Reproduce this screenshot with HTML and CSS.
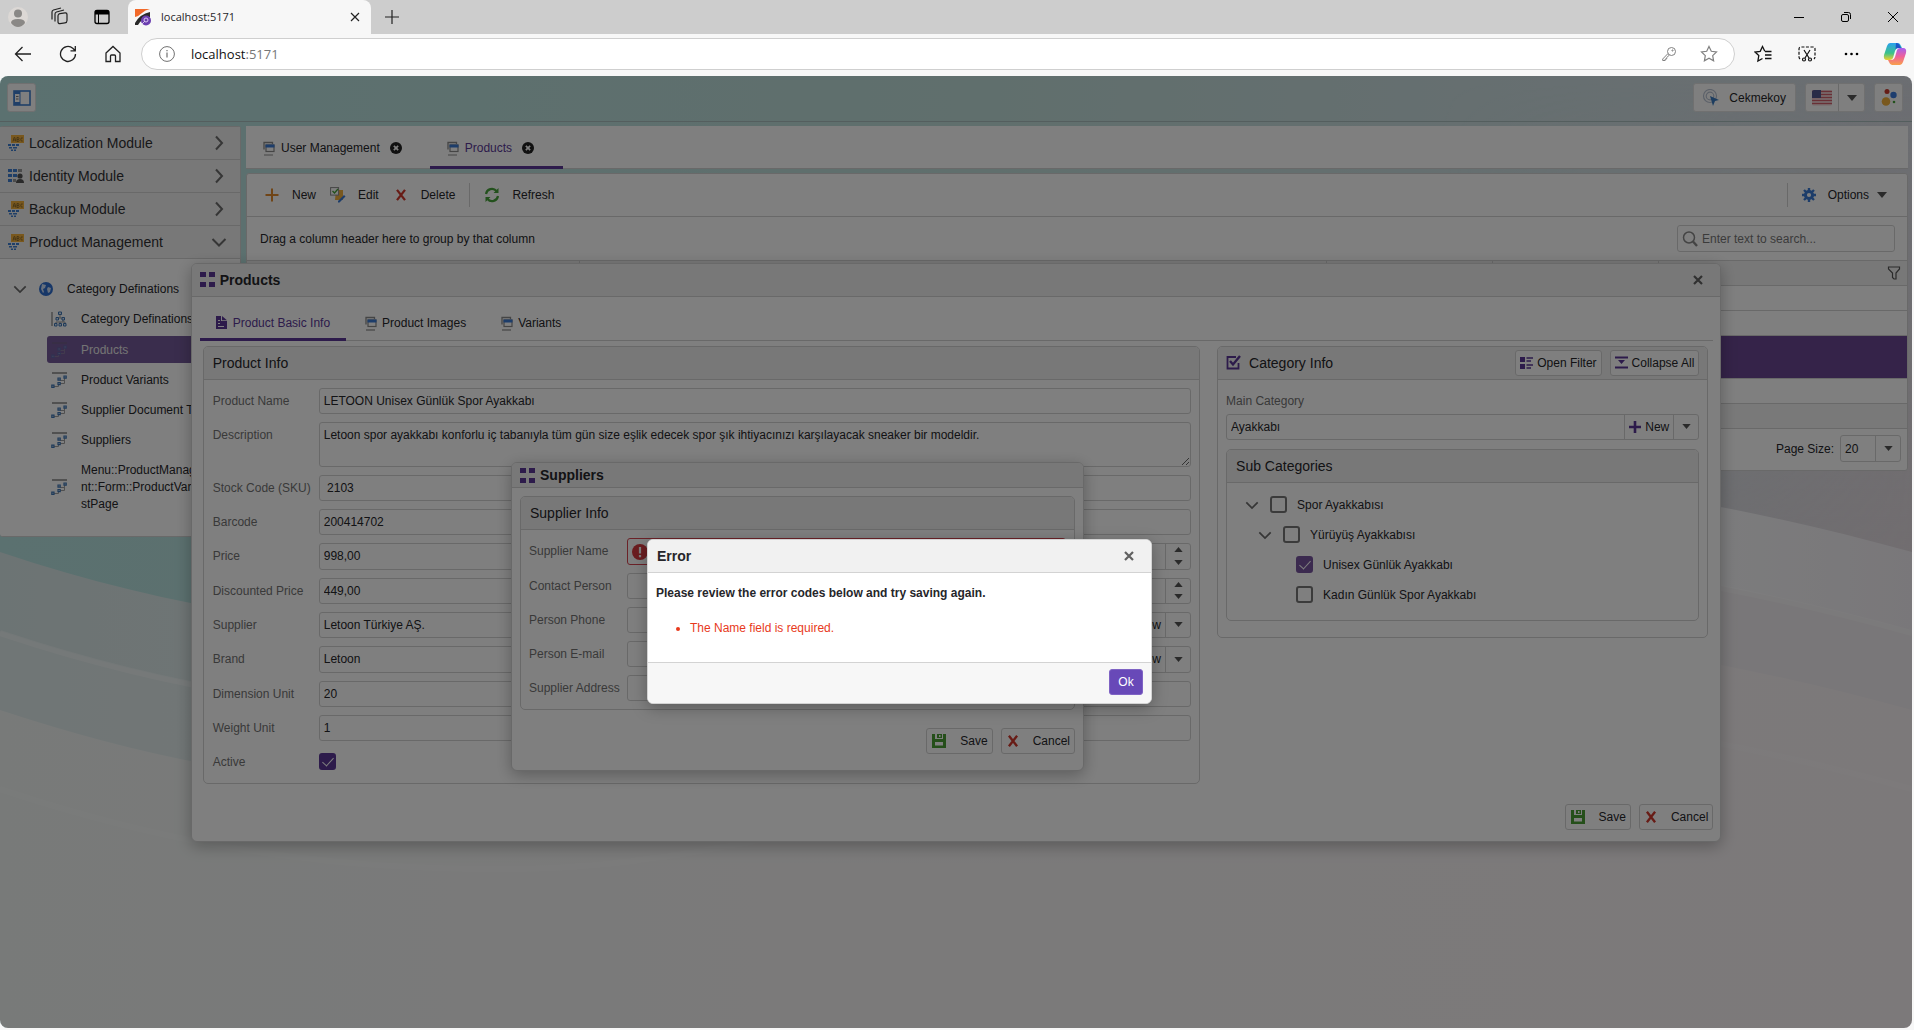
FILE: index.html
```html
<!DOCTYPE html>
<html lang="en">
<head>
<meta charset="utf-8">
<title>localhost:5171</title>
<link rel="stylesheet" href="styles.css">
</head>
<body>
<svg class="defs" aria-hidden="true">
  <symbol id="i-window" viewBox="0 0 12 16"><path d="M1 9.500V2.500h8.500v1.500" fill="none" stroke="#8a8a8a" stroke-width="1.300"/><rect x="3" y="5" width="8" height="6.500" fill="#fff" stroke="#8a8a8a" stroke-width="1.200"/><rect x="2.500" y="4.500" width="9" height="3" fill="#3a7bd5"/><path d="M1 15h9" stroke="#8a8a8a" stroke-width="1.200"/></symbol>
  <symbol id="i-module" viewBox="0 0 16 16"><rect x="3" y="0" width="13" height="8" fill="#f2b03c"/><path d="M5 6.500l1-4h.8l1 4M5.500 5h2M9 2.500v4h1.200q1 0 1-1t-1-1H9h1q1 0 1-1t-1-1zM14.800 3q-2-.9-2 1.500t2 1.500" fill="none" stroke="#8a6a2c" stroke-width=".9"/><path d="M0 9h3v2H0zM4 9h3v2H4zM8 9h3v2H8zM1 12h3v1.500H1zM5 12h4v1.500H5zM3 14.500h2V16H3zM6 14.500h2V16H6z" fill="#3f7fd0"/></symbol>
  <symbol id="i-identity" viewBox="0 0 16 16"><path d="M0 1h4v3H0zM5 1h4v3H5zM0 6h4v3H0zM5 6h4v3H5zM0 11h4v3H0z" fill="#3f7fd0"/><path d="M10 1h4v3h-4zM5 11h3v3H5z" fill="#999"/><circle cx="12" cy="8" r="2.600" fill="#555"/><path d="M8 15q0-4 4-4t4 4z" fill="#555"/></symbol>
  <symbol id="i-tree" viewBox="0 0 16 16"><path d="M1 1h15" stroke="#666" stroke-width="1.200"/><path d="M13.500 5v3.500H9M9 11.500h4.500V8M7.500 12v2.500H3" fill="none" stroke="#a0a0a0"/><path d="M13 4h2.200v2.200H13zM7 6h2.200v2.200H7zM7 10.500h2.200v2.200H7zM.8 13.200H3v2.200H.8z" fill="#dbe9f8" stroke="#3f76b5" stroke-width="1.200"/></symbol>
  <symbol id="i-org" viewBox="0 0 16 16"><path d="M1 1v14" stroke="#666"/><path d="M9 3v4M6 9v-2h6v4M5 14v-3h9v3M9 11v3" fill="none" stroke="#999"/><path d="M7.500 1h3v2.500h-3zM5 6.500h2.500V9H5zM11 6.500h2.500V9H11zM3.500 12.500H6V15H3.500zM8 12.500h2.500V15H8zM12.500 12.500H15V15h-2.500z" fill="#dbe9f8" stroke="#3f76b5"/></symbol>
  <symbol id="i-chev-r" viewBox="0 0 16 16"><path d="M5 1.500l6 6.500-6 6.500" fill="none" stroke="#6c6c6c" stroke-width="2"/></symbol>
  <symbol id="i-chev-d" viewBox="0 0 16 16"><path d="M1.500 5L8 11.500 14.500 5" fill="none" stroke="#6c6c6c" stroke-width="2"/></symbol>
  <symbol id="i-arrow" viewBox="0 0 10 6"><path d="M0 0h10L5 6z" fill="#555"/></symbol>
  <symbol id="i-arrow-up" viewBox="0 0 10 6"><path d="M0 6h10L5 0z" fill="#555"/></symbol>
  <symbol id="i-closec" viewBox="0 0 14 14"><circle cx="7" cy="7" r="7" fill="#222"/><path d="M4.500 4.500l5 5M9.500 4.500l-5 5" stroke="#fff" stroke-width="2"/></symbol>
  <symbol id="i-x" viewBox="0 0 12 12"><path d="M2.500 1.500l7 9M9.500 1.500l-7 9" stroke="#d0382c" stroke-width="2"/></symbol>
  <symbol id="i-close" viewBox="0 0 12 12"><path d="M2 2l8 8M10 2l-8 8" stroke="#606060" stroke-width="2.200"/></symbol>
  <symbol id="i-save" viewBox="0 0 16 16"><path d="M1 1h3v5h8V1h3v14H1z" fill="#4a9e34"/><path d="M6 1h5v4H6z" fill="#4a9e34"/><path d="M8 2h1.500v2H8zM4 9h8v3.500H4z" fill="#fff"/></symbol>
  <symbol id="i-grid" viewBox="0 0 15 15"><path d="M0 0h6v5H0zM9 0h6v5H9zM0 10h6v5H0zM9 10h6v5H9z" fill="#5a3796"/></symbol>
  <symbol id="i-plus" viewBox="0 0 12 12"><path d="M6 0v12M0 6h12" stroke="#5a3796" stroke-width="2.600"/></symbol>
</svg>

<header class="chrome">
  <div class="tabstrip">
    <svg class="ico20 avatar" viewBox="0 0 20 20"><circle cx="10" cy="10" r="10" fill="#dcd8d5"/><circle cx="10" cy="6.500" r="4" fill="#8a8886"/><path d="M3 16q0-4 7-4t7 4q-3 4-7 4t-7-4z" fill="#8a8886"/></svg>
    <svg class="ico20" viewBox="0 0 20 20" fill="none" stroke="#222" stroke-width="1.200"><rect x="8" y="6" width="9" height="10" rx="2" transform="skewY(-8) translate(0 2)"/><path d="M5 14.500V7q0-1.500 1.500-2L14 3M2 12.500V5q0-1.500 1.500-2L11 1"/></svg>
    <svg class="ico20" viewBox="0 0 20 20"><rect x="3" y="3.500" width="14" height="13" rx="2" fill="none" stroke="#000" stroke-width="1.300"/><path d="M3 5q0-2 2-2h10q2 0 2 2v2.500H3z"/><path d="M6.500 7v9" stroke="#000"/></svg>
    <div class="browser-tab">
      <svg class="ico18" viewBox="0 0 18 18"><path d="M1 1h15q-5 1-8 4T1 9z" fill="#f26a2a"/><path d="M1 15q5-9 15-11v5Q8 10 4 17H1z" fill="#2a2a2a"/><circle cx="12" cy="12.500" r="5" fill="#6b3fb0"/><circle cx="12" cy="12" r="2" fill="none" stroke="#d9c8ef"/><path d="M8 16l3-3" stroke="#d9c8ef"/></svg>
      <span class="browser-title">localhost:5171</span>
      <svg class="ico10" viewBox="0 0 10 10"><path d="M1 1l8 8M9 1L1 9" stroke="#222" stroke-width="1.200"/></svg>
    </div>
    <svg class="ico14" viewBox="0 0 14 14"><path d="M7 0v14M0 7h14" stroke="#222" stroke-width="1.200"/></svg>
    <div class="win-btns">
      <svg class="ico10" viewBox="0 0 10 10"><path d="M0 5.500h10" stroke="#000"/></svg>
      <svg class="ico10" viewBox="0 0 10 10" fill="none" stroke="#000"><rect x=".5" y="2.500" width="7" height="7" rx="1.500"/><path d="M3 .500h4.500q2 0 2 2V7"/></svg>
      <svg class="ico10" viewBox="0 0 10 10"><path d="M0 0l10 10M10 0L0 10" stroke="#000"/></svg>
    </div>
  </div>
  <div class="navbar">
    <svg class="ico18" viewBox="0 0 18 18" fill="none" stroke="#222" stroke-width="1.300"><path d="M17 9H1.500M8.500 2L1.500 9l7 7"/></svg>
    <svg class="ico18" viewBox="0 0 18 18" fill="none" stroke="#222" stroke-width="1.300"><path d="M16.500 9A7.500 7.500 0 1 1 13.800 3.200L16 5.500M16.300 1v4.800h-4.800"/></svg>
    <svg class="ico18" viewBox="0 0 18 18" fill="none" stroke="#222" stroke-width="1.300"><path d="M2 8l7-6.500L16 8v8.500h-4.500V11q0-1-1-1h-3q-1 0-1 1v5.500H2z"/></svg>
    <div class="address">
      <svg class="ico16" viewBox="0 0 16 16"><circle cx="8" cy="8" r="7.400" fill="none" stroke="#707070"/><path d="M8 6.500v5M8 4v1.300" stroke="#707070" stroke-width="1.200"/></svg>
      <span class="url">localhost<span class="port">:5171</span></span>
      <svg class="ico14" viewBox="0 0 14 14" fill="none" stroke="#808080"><circle cx="9.500" cy="4.500" r="4"/><path d="M6 6.500L.7 12v1.500h2.500V12h1.500v-1.500L7.500 8"/><circle cx="10.500" cy="3.500" r=".6"/></svg>
      <svg class="ico18" viewBox="0 0 18 18" fill="none" stroke="#808080" stroke-width="1.200"><path d="M9 1.500l2.300 4.800 5.200.7-3.800 3.600.9 5.200L9 13.300l-4.600 2.500.9-5.200L1.500 7l5.200-.7z"/></svg>
    </div>
    <div class="nav-right">
      <svg class="ico18" viewBox="0 0 18 18" fill="none" stroke="#111" stroke-width="1.300"><path d="M10.800 6.300L8.500 1.500 6.200 6.300 1 7l3.800 3.600-.9 5.400 4.600-2.500M11 6.500h6.500M11 10h6.500M11 13.500h6.500"/></svg>
      <svg class="ico18" viewBox="0 0 18 18" fill="none" stroke="#111" stroke-width="1.200"><path d="M2 14q-1-1-1-2V4q0-2 2-2h12q2 0 2 2v8q0 1-1 2" stroke-dasharray="3 1.500"/><path d="M6 5l5 8M12 5l-5 8"/><circle cx="6" cy="14.500" r="1.500"/><circle cx="12" cy="14.500" r="1.500"/></svg>
      <svg class="ico18" viewBox="0 0 18 18"><circle cx="4" cy="9" r="1.300"/><circle cx="9.500" cy="9" r="1.300"/><circle cx="15" cy="9" r="1.300"/></svg>
      <svg class="ico24" viewBox="0 0 24 24"><defs><linearGradient id="cp1" x1="0" y1="0" x2="0" y2="1"><stop offset="0" stop-color="#2aa0ee"/><stop offset=".6" stop-color="#3cc28a"/><stop offset="1" stop-color="#f0cf2e"/></linearGradient><linearGradient id="cp2" x1="0" y1="0" x2="0" y2="1"><stop offset="0" stop-color="#a55ff0"/><stop offset=".5" stop-color="#f0609a"/><stop offset="1" stop-color="#f8a04a"/></linearGradient></defs><path d="M7 1h8q2 0 3 3l1 2h-4q-2 0-3 3l-2 7q-1 2-3 2H4q-4 0-3-5l3-9q1-3 3-3z" fill="url(#cp1)"/><path d="M17 23H9q-2 0-3-3l-1-2h4q2 0 3-3l2-7q1-2 3-2h3q4 0 3 5l-3 9q-1 3-3 3z" fill="url(#cp2)"/><path d="M13 1q3 0 4 3l1 2h-3q-2 0-2.500 1.500z" fill="#1d55c8"/></svg>
    </div>
  </div>
</header>

<main class="app">
  <svg class="backdrop" viewBox="0 0 1912 952" preserveAspectRatio="none" aria-hidden="true">
    <defs>
      <linearGradient id="sky" x1="0" y1="0" x2="1" y2="0"><stop offset="0" stop-color="#b6e2e0"/><stop offset=".5" stop-color="#c0deda"/><stop offset=".85" stop-color="#d0dfe3"/><stop offset="1" stop-color="#d8dce4"/></linearGradient>
      <linearGradient id="fade" x1="0" y1="0" x2="0" y2="1"><stop offset="0" stop-color="#e3dbe0" stop-opacity="0"/><stop offset=".5" stop-color="#e3dbe0"/></linearGradient>
      <linearGradient id="ground" x1="0" y1="0" x2="1" y2="0"><stop offset="0" stop-color="#d9e8e8"/><stop offset=".5" stop-color="#f0f2f2"/><stop offset=".9" stop-color="#f8f8fa"/><stop offset="1" stop-color="#f3eff4"/></linearGradient>
      <linearGradient id="mid" x1="0" y1="0" x2="1" y2="0"><stop offset="0" stop-color="#e0ecec"/><stop offset=".5" stop-color="#f0f2f2"/><stop offset="1" stop-color="#f3eef2"/></linearGradient>
      <linearGradient id="low" x1="0" y1="0" x2="1" y2="0"><stop offset="0" stop-color="#f1f5f3"/><stop offset=".4" stop-color="#f6f5f5"/><stop offset="1" stop-color="#f9f3f5"/></linearGradient>
      <linearGradient id="side" x1="0" y1="0" x2="1" y2="0"><stop offset=".75" stop-color="#fff" stop-opacity="0"/><stop offset="1" stop-color="#fff"/></linearGradient>
      <mask id="right"><path d="M0 0h1912v952H0z" fill="url(#side)"/></mask>
    </defs>
    <path d="M0 0h1912v952H0z" fill="url(#sky)"/>
    <path d="M0 0h1912v952H0z" fill="url(#fade)" mask="url(#right)"/>
    <path d="M0 476C180 536 340 558 520 556S900 496 1150 426C1350 370 1620 396 1912 476V952H0z" fill="url(#ground)"/>
    <path d="M0 555C180 615 340 637 520 635S900 575 1150 505C1350 449 1620 475 1912 555V952H0z" fill="url(#mid)"/>
    <path d="M0 557C180 617 340 639 520 637S900 577 1150 507C1350 451 1620 477 1912 557" fill="none" stroke="#fff" stroke-opacity=".35" stroke-width="6"/>
    <path d="M0 634C180 694 340 716 520 714S900 654 1150 584C1350 528 1620 554 1912 634V952H0z" fill="url(#low)"/>
    <path d="M0 713C180 773 340 795 520 793S900 733 1150 663C1350 607 1620 633 1912 713" fill="none" stroke="#fff" stroke-opacity=".2" stroke-width="6"/>
  </svg>

  <div class="app-header">
    <button class="btn square" aria-label="Toggle sidebar"><svg class="ico18" viewBox="0 0 18 18"><rect x="1" y="2" width="16" height="14" fill="#fff" stroke="#3f7fd0" stroke-width="1.600"/><path d="M1 2h6.500v14H1z" fill="#3f7fd0"/><path d="M2 5h4.500v8H2z" fill="#fff"/><path d="M3 7.500h2.500M3 10h2.500" stroke="#777"/></svg></button>
    <div class="header-actions">
      <button class="btn user"><svg class="ico18" viewBox="0 0 18 18"><g fill="none" stroke="#b9c3d3" stroke-width="1.200"><circle cx="8" cy="7" r="6.500"/><circle cx="8" cy="7" r="3.800"/></g><path d="M8 7l9 4-4 1-2 5z" fill="#3a7bc0"/></svg>Cekmekoy</button>
      <div class="split">
        <button class="btn flag" aria-label="Language"><svg viewBox="0 0 20 16" width="20" height="16"><rect width="20" height="16" rx="2" fill="#f6e6e8"/><path d="M0 1.500h20M0 4.500h20M0 7.500h20M0 10.500h20M0 13.500h20" stroke="#d2606c" stroke-width="1.500"/><path d="M0 2q0-2 2-2h7v8H0z" fill="#53588e"/></svg></button>
        <button class="btn drop" aria-label="Choose language"><svg width="10" height="6"><use href="#i-arrow"/></svg></button>
      </div>
      <button class="btn square" aria-label="Theme"><svg class="ico18" viewBox="0 0 18 18"><circle cx="7" cy="2.500" r="2.500" fill="#cc3a2e"/><circle cx="13.500" cy="6" r="3.200" fill="#3a7bdc"/><circle cx="6" cy="12.500" r="4.300" fill="#f2b03c"/><circle cx="14" cy="13" r="1.300" fill="#47a33a"/></svg></button>
    </div>
  </div>

  <div class="workspace">
    <nav class="sidebar">
      <button class="module"><svg class="ico16"><use href="#i-module"/></svg><span>Localization Module</span><svg class="ico16"><use href="#i-chev-r"/></svg></button>
      <button class="module"><svg class="ico16"><use href="#i-identity"/></svg><span>Identity Module</span><svg class="ico16"><use href="#i-chev-r"/></svg></button>
      <button class="module"><svg class="ico16"><use href="#i-module"/></svg><span>Backup Module</span><svg class="ico16"><use href="#i-chev-r"/></svg></button>
      <button class="module"><svg class="ico16"><use href="#i-module"/></svg><span>Product Management</span><svg class="ico16"><use href="#i-chev-d"/></svg></button>
      <div class="menu">
        <a class="menu-root" href="#"><svg class="ico14"><use href="#i-chev-d"/></svg><svg class="ico14" viewBox="0 0 14 14"><circle cx="7" cy="7" r="7" fill="#2f6fd0"/><path d="M3 2l4 1-1 3-2 1 1 3-1 1-2-4zM9 5l3 1-1 4-2 1-1-4z" fill="#cfe0f8"/></svg><span>Category Definations</span></a>
        <a class="menu-item" href="#"><svg class="ico16"><use href="#i-org"/></svg><span>Category Definations</span></a>
        <a class="menu-item current" href="#"><svg class="ico16 faint"><use href="#i-tree"/></svg><span>Products</span></a>
        <a class="menu-item" href="#"><svg class="ico16"><use href="#i-tree"/></svg><span>Product Variants</span></a>
        <a class="menu-item" href="#"><svg class="ico16"><use href="#i-tree"/></svg><span>Supplier Document Types</span></a>
        <a class="menu-item" href="#"><svg class="ico16"><use href="#i-tree"/></svg><span>Suppliers</span></a>
        <a class="menu-item tall" href="#"><svg class="ico16"><use href="#i-tree"/></svg><span>Menu::ProductManagement::Form::ProductVariantListPage</span></a>
      </div>
    </nav>

    <section class="content">
      <div class="page-tabs">
        <a class="page-tab" href="#"><svg class="tabico"><use href="#i-window"/></svg>User Management<svg class="ico12"><use href="#i-closec"/></svg></a>
        <a class="page-tab current" href="#"><svg class="tabico"><use href="#i-window"/></svg>Products<svg class="ico12"><use href="#i-closec"/></svg></a>
      </div>
      <div class="grid">
        <div class="toolbar">
          <button class="tool"><svg class="ico16" viewBox="0 0 16 16"><path d="M8 1.500v13M1.500 8h13" stroke="#e08a2e" stroke-width="2"/></svg>New</button>
          <button class="tool"><svg class="ico16" viewBox="0 0 16 16"><path d="M6 3h7v10H5z" fill="#f2b03c"/><rect x=".6" y=".6" width="8" height="7.500" fill="#fff" stroke="#8a8a8a"/><path d="M2.500 4l2 2 3.500-4" fill="none" stroke="#47a33a" stroke-width="1.400"/><path d="M15.500 9.500l-6 6H8V14l6-6z" fill="#3a7bd5"/></svg>Edit</button>
          <button class="tool"><svg class="ico16" viewBox="-1 -1 14 14"><use href="#i-x" width="12" height="12"/></svg>Delete</button>
          <i class="sep"></i>
          <button class="tool"><svg class="ico16" viewBox="0 0 16 16" fill="none" stroke="#47a33a" stroke-width="2.200"><path d="M2 7a6 6 0 0 1 10.500-3M14 9a6 6 0 0 1-10.500 3"/><path d="M14.500 1v5h-5zM1.500 15v-5h5z" fill="#47a33a" stroke="none"/></svg>Refresh</button>
          <i class="sep push"></i>
          <button class="tool"><svg class="ico14" viewBox="0 0 14 14"><circle cx="7" cy="7" r="3.600" fill="none" stroke="#3a7bd5" stroke-width="3"/><path d="M7 0v3M7 11v3M0 7h3M11 7h3M2 2l2 2M10 10l2 2M12 2l-2 2M4 10l-2 2" stroke="#3a7bd5" stroke-width="2.400"/></svg>Options<svg class="opt-arrow" width="10" height="6"><use href="#i-arrow"/></svg></button>
        </div>
        <div class="group-row">
          <span>Drag a column header here to group by that column</span>
          <label class="search"><svg class="ico16" viewBox="0 0 16 16" fill="none" stroke="#888"><circle cx="7" cy="6.500" r="5.500" stroke-width="1.500"/><path d="M11 10.500l4 4.500" stroke-width="2.400"/></svg><input type="search" placeholder="Enter text to search..." aria-label="Search"></label>
        </div>
        <table class="rows">
          <colgroup><col class="c20"><col class="c45"><col class="c10"><col class="c10"><col></colgroup>
          <thead><tr><th></th><th></th><th></th><th></th><th class="funnel"><svg class="ico14" viewBox="0 0 14 14"><path d="M1.500 1h11v2L9 7v6H7L5.500 11.500V7L1.500 3z" fill="none" stroke="#555" stroke-width="1.200"/></svg></th></tr></thead>
          <tbody>
            <tr><td colspan="5"></td></tr>
            <tr><td colspan="5"></td></tr>
            <tr class="picked"><td colspan="5"></td></tr>
            <tr><td colspan="5"></td></tr>
            <tr class="totals"><td colspan="5"></td></tr>
          </tbody>
        </table>
        <div class="pager">
          <label for="page-size">Page Size:</label>
          <span class="combo page-size"><select id="page-size"><option>20</option></select><span class="combo-drop"><svg width="9" height="5"><use href="#i-arrow"/></svg></span></span>
        </div>
      </div>
    </section>
  </div>

  <div class="layer">
    <section class="dialog products" role="dialog" aria-labelledby="dlg-products">
      <header class="dialog-head"><svg class="ico15"><use href="#i-grid"/></svg><h2 id="dlg-products">Products</h2><button class="close" aria-label="Close products"><svg class="ico12"><use href="#i-close"/></svg></button></header>
      <div class="dialog-tabs">
        <a class="dialog-tab current" href="#"><svg class="ico13" viewBox="0 0 13 13"><path d="M1 0h5v5h6v8H1z" fill="#5a3796"/><path d="M7 0l5 4.200H7z" fill="#5a3796"/><path d="M3 4.500h2M3 7.500h2M3 10.500h6" stroke="#fff"/></svg>Product Basic Info</a>
        <a class="dialog-tab" href="#"><svg class="tabico"><use href="#i-window"/></svg>Product Images</a>
        <a class="dialog-tab" href="#"><svg class="tabico"><use href="#i-window"/></svg>Variants</a>
      </div>
      <div class="dialog-cols">
        <section class="group">
          <h3>Product Info</h3>
          <div class="form">
            <label for="p-name">Product Name</label><input class="field" id="p-name" value="LETOON Unisex Günlük Spor Ayakkabı">
            <label for="p-desc">Description</label><textarea class="field" id="p-desc">Letoon spor ayakkabı konforlu iç tabanıyla tüm gün size eşlik edecek spor şık ihtiyacınızı karşılayacak sneaker bir modeldir.</textarea>
            <label for="p-sku">Stock Code (SKU)</label><input class="field" id="p-sku" value=" 2103">
            <label for="p-bar">Barcode</label><input class="field" id="p-bar" value="200414702">
            <label for="p-price">Price</label><span class="combo spin"><input id="p-price" value="998,00"><span class="spinner"><button aria-label="Increase price"><svg width="9" height="5"><use href="#i-arrow-up"/></svg></button><button aria-label="Decrease price"><svg width="9" height="5"><use href="#i-arrow"/></svg></button></span></span>
            <label for="p-disc">Discounted Price</label><span class="combo"><input id="p-disc" value="449,00"><span class="spinner"><button aria-label="Increase discounted price"><svg width="9" height="5"><use href="#i-arrow-up"/></svg></button><button aria-label="Decrease discounted price"><svg width="9" height="5"><use href="#i-arrow"/></svg></button></span></span>
            <label for="p-sup">Supplier</label><span class="combo"><input id="p-sup" value="Letoon Türkiye AŞ."><button class="combo-new"><svg class="ico12"><use href="#i-plus"/></svg>New</button><button class="combo-drop" aria-label="Choose supplier"><svg width="9" height="5"><use href="#i-arrow"/></svg></button></span>
            <label for="p-brand">Brand</label><span class="combo spin"><input id="p-brand" value="Letoon"><button class="combo-new"><svg class="ico12"><use href="#i-plus"/></svg>New</button><button class="combo-drop" aria-label="Choose brand"><svg width="9" height="5"><use href="#i-arrow"/></svg></button></span>
            <label for="p-dim">Dimension Unit</label><input class="field" id="p-dim" value="20">
            <label for="p-wt">Weight Unit</label><input class="field" id="p-wt" value="1">
            <label for="p-act">Active</label><span class="tick-cell"><input class="tick" type="checkbox" id="p-act" checked></span>
          </div>
        </section>
        <section class="group category">
          <h3><svg class="ico15" viewBox="0 0 15 15"><path d="M10 2H1.500v11.500H12.500V8" fill="none" stroke="#5a3796" stroke-width="1.800"/><path d="M4 6l3 3.500 7-8.500" fill="none" stroke="#5a3796" stroke-width="2.400"/></svg><span>Category Info</span>
            <button class="btn small"><svg class="ico13" viewBox="0 0 13 13"><path d="M0 1h5v5H0zM0 8h5v5H0z" fill="#5a3796"/><path d="M6.500 2H13M6.500 5H11M6.500 9H13M6.500 12H11" stroke="#5a3796" stroke-width="1.600"/></svg>Open Filter</button>
            <button class="btn small"><svg class="ico13" viewBox="0 0 13 13"><path d="M0 1.500h13M0 11.500h13" stroke="#5a3796" stroke-width="2"/><path d="M3 4h7L6.500 8z" fill="#5a3796"/></svg>Collapse All</button>
          </h3>
          <div class="category-body">
            <label for="p-main">Main Category</label>
            <span class="combo"><input id="p-main" value="Ayakkabı"><button class="combo-new"><svg class="ico12"><use href="#i-plus"/></svg>New</button><button class="combo-drop" aria-label="Choose main category"><svg width="9" height="5"><use href="#i-arrow"/></svg></button></span>
            <section class="group">
              <h3>Sub Categories</h3>
              <div class="tree">
                <div class="node"><svg class="ico14"><use href="#i-chev-d"/></svg><label><input class="tick" type="checkbox">Spor Ayakkabısı</label></div>
                <div class="node level2"><svg class="ico14"><use href="#i-chev-d"/></svg><label><input class="tick" type="checkbox">Yürüyüş Ayakkabısı</label></div>
                <div class="node level3"><label><input class="tick soft" type="checkbox" checked>Unisex Günlük Ayakkabı</label></div>
                <div class="node level3"><label><input class="tick" type="checkbox">Kadın Günlük Spor Ayakkabı</label></div>
              </div>
            </section>
          </div>
        </section>
      </div>
      <footer class="actions">
        <button class="btn"><svg class="ico16"><use href="#i-save"/></svg>Save</button>
        <button class="btn"><svg class="ico14"><use href="#i-x"/></svg>Cancel</button>
      </footer>
    </section>
  </div>

  <section class="dialog suppliers" role="dialog" aria-labelledby="dlg-suppliers">
    <header class="dialog-head short"><svg class="ico15"><use href="#i-grid"/></svg><h2 id="dlg-suppliers">Suppliers</h2></header>
    <section class="group">
      <h3>Supplier Info</h3>
      <div class="form">
        <label for="s-name">Supplier Name</label><span class="combo invalid"><svg class="ico16" viewBox="0 0 16 16"><circle cx="8" cy="8" r="8" fill="#d63a40"/><path d="M8 3v6.500M8 11v2.200" stroke="#fff" stroke-width="2.200"/></svg><input id="s-name"></span>
        <label for="s-contact">Contact Person</label><input class="field" id="s-contact">
        <label for="s-phone">Person Phone</label><input class="field" id="s-phone">
        <label for="s-mail">Person E-mail</label><input class="field" id="s-mail">
        <label for="s-addr">Supplier Address</label><input class="field" id="s-addr">
      </div>
    </section>
    <footer class="actions">
      <button class="btn"><svg class="ico16"><use href="#i-save"/></svg>Save</button>
      <button class="btn"><svg class="ico14"><use href="#i-x"/></svg>Cancel</button>
    </footer>
  </section>

  <div class="shade"></div>

  <section class="dialog error" role="alertdialog" aria-labelledby="dlg-error">
    <header class="dialog-head"><h2 id="dlg-error">Error</h2><button class="close" aria-label="Close error"><svg class="ico12"><use href="#i-close"/></svg></button></header>
    <div class="error-body">
      <p>Please review the error codes below and try saving again.</p>
      <ul><li>The Name field is required.</li></ul>
    </div>
    <footer class="error-foot"><button class="ok">Ok</button></footer>
  </section>
</main>
</body>
</html>
```
FILE: styles.css
```css
:root {
  --line: #d3d3d3;
  --head: #f1f1f1;
  --text: #26262a;
  --muted: #737373;
  --accent: #5a3796;
  --pick: #6a4792;
}

* { box-sizing: border-box; }

html, body { height: 100%; }

body {
  margin: 0;
  display: flex;
  flex-direction: column;
  background: #f7f7f7;
  color: var(--text);
  font: 12px/16px "Liberation Sans", Arial, sans-serif;
}

button, input, select, textarea {
  font: inherit;
  color: inherit;
  margin: 0;
}

button { cursor: pointer; }
a { color: inherit; text-decoration: none; }
h2, h3, p, ul { margin: 0; }
svg { flex: none; display: block; }

.defs { position: absolute; width: 0; height: 0; }
.ico10 { width: 10px; height: 10px; }
.ico12 { width: 12px; height: 12px; }
.ico13 { width: 13px; height: 13px; }
.ico14 { width: 14px; height: 14px; }
.ico15 { width: 15px; height: 15px; }
.ico16 { width: 16px; height: 16px; }
.ico18 { width: 18px; height: 18px; }
.ico20 { width: 20px; height: 20px; }
.ico24 { width: 24px; height: 24px; }
.tabico { width: 12px; height: 16px; }

/* Browser window */
.chrome { font-family: "Open Sans", sans-serif; }

.tabstrip {
  height: 34px;
  display: flex;
  align-items: center;
  gap: 22px;
  padding-left: 8px;
  background: #cdcdcd;
}

.tabstrip .avatar { height: 22px; }

.browser-tab {
  align-self: stretch;
  width: 243px;
  margin: 0 -8px 0 -6px;
  padding: 0 11px 0 6px;
  display: flex;
  align-items: center;
  gap: 9px;
  border-radius: 8px 8px 0 0;
  background: #f7f7f7;
  font-size: 11px;
}

.browser-title { flex: 1; }

.win-btns {
  display: flex;
  gap: 37px;
  margin-left: auto;
  padding-right: 16px;
}

.navbar {
  height: 42px;
  display: flex;
  align-items: center;
  gap: 27px;
  padding: 0 7px 2px 14px;
}

.address {
  flex: 1;
  height: 32px;
  margin-left: -8px;
  padding: 0 16px 0 17px;
  display: flex;
  align-items: center;
  gap: 24px;
  border: 1px solid #cfcfcf;
  border-radius: 16px;
  background: #fff;
  font-size: 13px;
}

.url { flex: 1; margin-left: -8px; color: #111; }
.port { color: #767676; }
.nav-right { display: flex; align-items: center; gap: 26px; margin-left: -8px; }
.nav-right .ico24 { margin-left: -3px; }

/* Application */
.app {
  position: relative;
  flex: 1;
  display: flex;
  flex-direction: column;
  margin: 0 2px 2px 0;
  overflow: hidden;
  border-radius: 8px;
}

.backdrop { position: absolute; inset: 0; width: 100%; height: 100%; }

.app-header {
  position: relative;
  display: flex;
  justify-content: space-between;
  align-items: center;
  height: 46px;
  padding: 0 9px 2px 7px;
  border-bottom: 1px solid #a9bcbc;
}

.header-actions { display: flex; gap: 9px; }

.btn {
  display: flex;
  align-items: center;
  justify-content: center;
  border: 1px solid var(--line);
  border-radius: 3px;
  background: #fff;
}

.app-header .btn { height: 29px; border-color: #e0e0e0; }
.btn.square { width: 29px; padding: 0; }
.btn.user { padding: 0 9px 0 8px; gap: 9px; }
.split { display: flex; }
.btn.flag { width: 34px; padding: 0; border-radius: 3px 0 0 3px; }
.btn.drop { width: 27px; padding: 0; margin-left: -1px; border-radius: 0 3px 3px 0; border-left-color: var(--line); }

.workspace {
  position: relative;
  display: flex;
  align-items: flex-start;
  gap: 5px;
  padding: 4px 4px 0 0;
}

.sidebar {
  width: 241px;
  height: 411px;
  flex: none;
  border: 1px solid var(--line);
  border-left: 0;
  border-radius: 3px;
  background: #fff;
}

.module {
  width: 100%;
  height: 33px;
  padding: 0 13px 0 8px;
  display: flex;
  align-items: center;
  gap: 5px;
  border: 0;
  border-bottom: 1px solid var(--line);
  background: var(--head);
  color: #303034;
  font-size: 14px;
  text-align: left;
}

.module span { flex: 1; }

.menu { display: flex; flex-direction: column; gap: 4px; padding-top: 17px; }
.menu-root { display: flex; align-items: center; gap: 12px; height: 26px; padding-left: 13px; }
.menu-root span { margin-left: 2px; }
.menu-item {
  display: flex;
  align-items: center;
  gap: 14px;
  height: 26px;
  margin-left: 47px;
  padding-left: 4px;
  border-radius: 3px;
  white-space: nowrap;
}
.menu-item.current { height: 27px; background: #745a9a; color: #e8e8e8; }
.menu-item.tall { height: 60px; line-height: 17px; }
.menu-item.tall span { width: 140px; white-space: normal; word-break: break-all; }
.faint { opacity: .4; }

.content { flex: 1; min-width: 0; }

.page-tabs {
  display: flex;
  height: 43px;
  padding-left: 1px;
  background: #fff;
  border-bottom: 1px solid var(--line);
}

.page-tab {
  display: flex;
  align-items: center;
  gap: 6px;
  height: 43px;
  padding: 3px 29px 0 16px;
  border-bottom: 3px solid transparent;
}

.page-tab .ico12 { margin-left: 4px; }
.page-tab.current, .dialog-tab.current { color: var(--accent); border-bottom-color: var(--accent); }
.page-tab.current { margin-left: -1px; padding-left: 17px; }

.grid {
  margin-top: 4px;
  border: 1px solid var(--line);
  border-radius: 3px;
  background: #fff;
}

.toolbar {
  display: flex;
  align-items: center;
  gap: 10px;
  height: 43px;
  padding: 0 18px 0 15px;
  border-bottom: 1px solid var(--line);
}

.tool {
  display: flex;
  align-items: center;
  gap: 12px;
  padding: 0 2px;
  border: 0;
  background: none;
}

.sep { width: 1px; height: 24px; margin: 0 2px; background: var(--line); }
.push { margin-left: auto; }
.opt-arrow { margin-left: -4px; }

.group-row {
  display: flex;
  align-items: center;
  justify-content: space-between;
  height: 43px;
  padding: 0 12px 0 13px;
}

.search {
  display: flex;
  align-items: center;
  gap: 4px;
  width: 218px;
  height: 27px;
  padding: 0 4px;
  border: 1px solid var(--line);
  border-radius: 3px;
}

.search input { flex: 1; min-width: 0; padding: 0; border: 0; background: none; outline: 0; }
.search input::placeholder { color: #777; }

.rows { width: 100%; table-layout: fixed; border-collapse: collapse; }
.rows th, .rows td { height: 25px; padding: 0; border-top: 1px solid var(--line); }
.rows th { background: var(--head); border-right: 1px solid var(--line); }
.rows th:last-child { border-right: 0; }
.rows .picked td { height: 43px; background: var(--pick); }
.rows .totals td { background: #f3f3f3; border-bottom: 1px solid var(--line); }
.funnel svg { margin: 0 6px 0 auto; }
.c20 { width: 20%; }
.c45 { width: 45%; }
.c10 { width: 10%; }

.pager { display: flex; align-items: center; justify-content: flex-end; gap: 6px; height: 41px; padding: 0 6px 2px 0; }

/* Form controls */
.field, .combo {
  width: 100%;
  height: 26px;
  border: 1px solid var(--line);
  border-radius: 3px;
  background: #fff;
}

.field { display: block; padding: 0 4px; outline: 0; }
textarea.field { height: 45px; padding-top: 4px; resize: vertical; }

.combo { display: flex; }
.combo.spin { height: 27px; }
.combo input, .combo select {
  flex: 1;
  min-width: 0;
  padding: 0 4px;
  border: 0;
  background: none;
  outline: 0;
  appearance: none;
}

.combo-new, .combo-drop {
  display: flex;
  align-items: center;
  justify-content: center;
  gap: 4px;
  padding: 0 4px;
  border: 0;
  border-left: 1px solid var(--line);
  background: none;
}

.combo-drop { width: 25px; }
.combo.page-size { width: 61px; height: 27px; }

.spinner {
  display: flex;
  flex-direction: column;
  width: 25px;
  border-left: 1px solid var(--line);
}

.spinner button {
  flex: 1;
  display: flex;
  align-items: center;
  justify-content: center;
  padding: 0;
  border: 0;
  background: none;
}

.combo.invalid { height: 27px; border-color: #d64550; align-items: center; padding-left: 4px; }

.tick {
  appearance: none;
  position: relative;
  flex: none;
  width: 17px;
  height: 17px;
  border: 2px solid #777;
  border-radius: 3px;
}

.tick:checked { border-color: var(--accent); background: var(--accent); }
.tick:checked::after {
  content: "";
  position: absolute;
  left: 4px;
  top: 0;
  width: 5px;
  height: 10px;
  border: solid #fff;
  border-width: 0 1px 1px 0;
  transform: rotate(42deg);
}
.tick.soft:checked { border-color: #77559f; background: #77559f; }
.tick-cell { display: flex; align-items: center; height: 26px; }

/* Dialogs */
.layer {
  position: absolute;
  inset: 0;
  display: flex;
  align-items: center;
  justify-content: center;
}

.dialog {
  border: 1px solid var(--line);
  border-radius: 6px;
  background: #fff;
  box-shadow: 0 4px 16px rgba(0, 0, 0, .28);
}

.dialog.products { width: calc(80% + 1px); }

.dialog-head {
  display: flex;
  align-items: center;
  gap: 5px;
  height: 33px;
  padding: 0 8px;
  border-bottom: 1px solid var(--line);
  border-radius: 5px 5px 0 0;
  background: var(--head);
}

.dialog-head.short { height: 25px; }
.dialog-head h2 { flex: 1; font-size: 14px; }
.close { padding: 0 8px; border: 0; background: none; }

.dialog-tabs {
  display: flex;
  gap: 4px;
  height: 36px;
  margin: 8px 7px 5px 8px;
  border-bottom: 1px solid var(--line);
}

.dialog-tab {
  display: flex;
  align-items: center;
  gap: 5px;
  height: 36px;
  padding: 3px 16px 0 15px;
  border-bottom: 3px solid transparent;
}

.dialog-cols {
  display: grid;
  grid-template-columns: 67fr 33fr;
  align-items: start;
  gap: 17px;
  padding: 0 12px 0 11px;
}

.group {
  border: 1px solid var(--line);
  border-radius: 5px;
}

.group > h3 {
  display: flex;
  align-items: center;
  gap: 8px;
  height: 33px;
  padding: 0 9px;
  border-bottom: 1px solid var(--line);
  border-radius: 4px 4px 0 0;
  background: var(--head);
  font-size: 14px;
  font-weight: 400;
}

.group > h3 > span { flex: 1; }

.form {
  display: grid;
  grid-template-columns: 106px 1fr;
  gap: 8px 0;
  padding: 8px 8px 8px 9px;
}

.form label, .category-body > label { color: var(--muted); line-height: 26px; }
.group.category > h3 { padding: 0 8px; }

.btn.small {
  gap: 4px;
  height: 26px;
  padding: 0 4px;
  font-size: 12px;
}

.category-body {
  display: flex;
  flex-direction: column;
  gap: 9px;
  padding: 8px 8px 16px;
}

.category-body > label { margin-bottom: -9px; }

.tree { padding: 7px 19px 10px 18px; }
.node { display: flex; align-items: center; gap: 11px; height: 30px; }
.node label { display: flex; align-items: center; gap: 10px; }
.level2 { padding-left: 13px; }
.level3 { padding-left: 51px; }

.actions { display: flex; justify-content: flex-end; gap: 8px; padding: 20px 7px 11px; }
.actions .btn { height: 26px; padding: 0 4px; gap: 13px; }

.dialog.suppliers {
  position: absolute;
  left: 511px;
  top: 386px;
  width: 573px;
}

.suppliers > .group { margin: 8px 8px 0; }
.suppliers .form { grid-template-columns: 98px 1fr; padding: 8px; }
.suppliers .actions { padding: 18px 8px 16px; }

.shade { position: absolute; inset: 0; background: rgba(0, 0, 0, .5); }

.dialog.error {
  position: absolute;
  left: 647px;
  top: 463px;
  width: 505px;
}

.error .dialog-head { padding-left: 9px; }
.error-body { height: 89px; padding: 12px 8px; }
.error-body p { font-weight: 700; }
.error-body ul { margin-top: 19px; padding-left: 34px; color: #e8391c; }
.error-foot {
  display: flex;
  justify-content: flex-end;
  padding: 6px 8px 8px;
  border-top: 1px solid var(--line);
  border-radius: 0 0 5px 5px;
  background: #f7f7f7;
}

.ok {
  width: 34px;
  height: 26px;
  padding: 0;
  border: 1px solid #7f63c4;
  border-radius: 3px;
  background: #6849b8;
  color: #fff;
}
```
